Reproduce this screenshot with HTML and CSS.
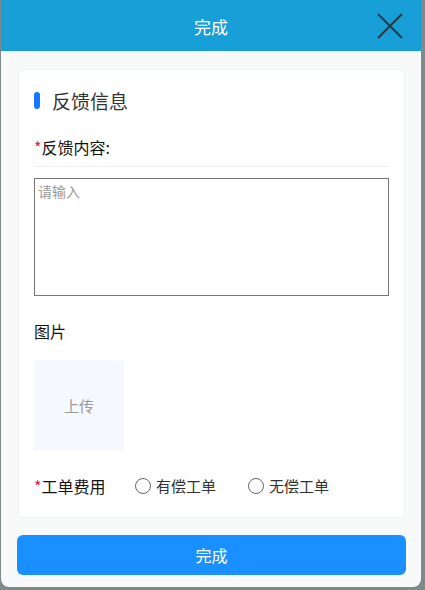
FILE: index.html
```html
<!DOCTYPE html>
<html lang="zh-CN">
<head>
<meta charset="utf-8">
<title>完成</title>
<link rel="stylesheet" href="styles.css">
</head>
<body>
<div class="dialog">
  <header class="head">
    <span class="head-title">完成</span>
    <span class="close" aria-label="关闭">
      <svg width="26" height="26" viewBox="0 0 26 26"><path d="M1 1 L25 25 M25 1 L1 25" stroke="#2b3a42" stroke-width="2" fill="none"/></svg>
    </span>
  </header>
  <main class="body">
    <section class="card">
      <div class="sec-title"><span class="bar"></span><span>反馈信息</span></div>
      <div class="label label-line"><span class="req">*</span>反馈内容:</div>
      <textarea class="input" placeholder="请输入"></textarea>
      <div class="label label-pic">图片</div>
      <div class="upload">上传</div>
      <div class="radio-row">
        <div class="label"><span class="req">*</span>工单费用</div>
        <label class="radio"><span class="circle"></span>有偿工单</label>
        <label class="radio"><span class="circle"></span>无偿工单</label>
      </div>
    </section>
    <button class="submit">完成</button>
  </main>
</div>
</body>
</html>
```
FILE: styles.css
```css
* { box-sizing: border-box; }
html, body { margin: 0; padding: 0; }
body {
  background: #7d8b89;
  font-family: "Noto Sans CJK SC", "Noto Sans", sans-serif;
  width: 425px;
  height: 590px;
  overflow: hidden;
}
.dialog {
  margin-left: 1px;
  width: 420px;
  height: 587px;
  background: #f8f9f9;
  border-radius: 0 0 8px 8px;
  display: flex;
  flex-direction: column;
  overflow: hidden;
}
.head {
  height: 51px;
  background: #189fd7;
  display: flex;
  align-items: center;
  justify-content: center;
  position: relative;
}
.head-title {
  color: #fff;
  font-size: 17px;
  line-height: 22px;
  margin-top: 2px;
}
.close {
  position: absolute;
  left: 376px;
  top: 13px;
  width: 26px;
  height: 26px;
  display: flex;
}
.body {
  padding: 18px 15px 0 16px;
  display: flex;
  flex-direction: column;
}
.card {
  background: #fff;
  border: 1px solid #f0f1f1;
  border-radius: 4px;
  margin-left: 1px;
  width: 387px;
  padding: 18px 15px 21px 15px;
  display: flex;
  flex-direction: column;
}
.sec-title {
  display: flex;
  align-items: center;
  height: 24px;
  font-size: 19px;
  color: #333;
}
.bar {
  width: 6px;
  height: 17px;
  border-radius: 3px;
  background: #1677ff;
  margin-right: 12px;
}
.label {
  font-size: 16px;
  line-height: 20px;
  color: #111;
}
.req { color: #e0203a; }
.label-line {
  margin-top: 25px;
  padding-bottom: 9px;
  border-bottom: 1px solid #eeeeee;
}
.input {
  margin-top: 11px;
  width: 355px;
  height: 118px;
  border: 1px solid #767676;
  padding: 2px 3px;
  font-family: inherit;
  font-size: 14px;
  resize: none;
  outline: none;
}
.input::placeholder { color: #999; }
.label-pic { margin-top: 25px; }
.upload {
  margin-top: 19px;
  width: 90px;
  height: 90px;
  background: #f5f8fe;
  color: #999;
  font-size: 15px;
  display: flex;
  align-items: center;
  justify-content: center;
}
.radio-row {
  margin-top: 26px;
  display: flex;
  align-items: center;
}
.radio-row .label { width: 101px; }
.radio {
  display: flex;
  align-items: center;
  font-size: 15px;
  line-height: 20px;
  color: #333;
  margin-right: 32px;
}
.circle {
  width: 16px;
  height: 16px;
  border: 1px solid #666;
  border-radius: 50%;
  margin-right: 5px;
}
.submit {
  margin-top: 17px;
  width: 389px;
  height: 40px;
  border: none;
  border-radius: 6px;
  background: #1a8fff;
  color: #fff;
  font-family: inherit;
  font-size: 16px;
}
```
